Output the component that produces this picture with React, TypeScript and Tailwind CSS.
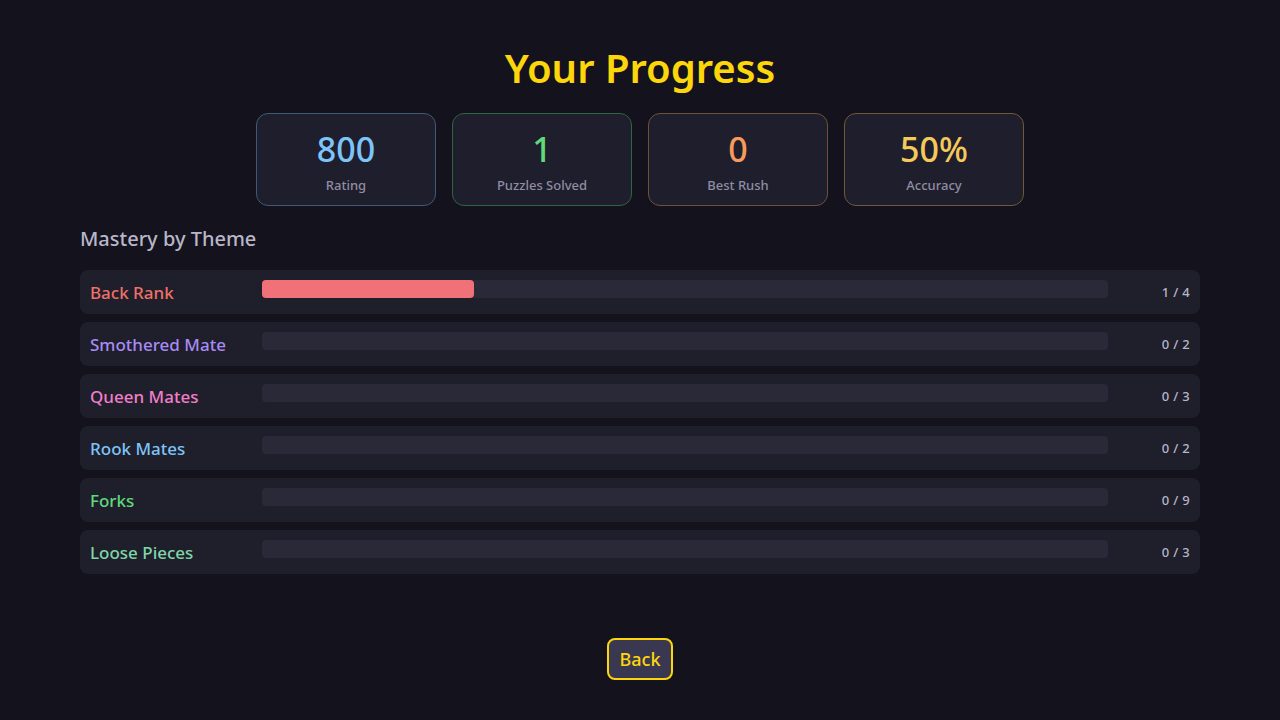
const stats = [
  { value: '800', label: 'Rating', text: 'text-[#7cc4fa]', border: 'border-[#3f5a78]' },
  { value: '1', label: 'Puzzles Solved', text: 'text-[#5fd97a]', border: 'border-[#2f6540]' },
  { value: '0', label: 'Best Rush', text: 'text-[#f79a5a]', border: 'border-[#6e5236]' },
  { value: '50%', label: 'Accuracy', text: 'text-[#f5c95a]', border: 'border-[#6e5a36]' },
]

const themes = [
  { name: 'Back Rank', color: 'text-[#ee7068]', solved: 1, total: 4 },
  { name: 'Smothered Mate', color: 'text-[#a98af5]', solved: 0, total: 2 },
  { name: 'Queen Mates', color: 'text-[#f07ec8]', solved: 0, total: 3 },
  { name: 'Rook Mates', color: 'text-[#7cc4fa]', solved: 0, total: 2 },
  { name: 'Forks', color: 'text-[#5fd97a]', solved: 0, total: 9 },
  { name: 'Loose Pieces', color: 'text-[#7fd6a8]', solved: 0, total: 3 },
]

export default function App() {
  return (
    <div className="min-h-screen w-full bg-[#14131d] font-['Noto_Sans',sans-serif]">
      <div className="mx-auto w-[1120px] pt-[41px]">
        <h1 className="text-center text-[40px] font-semibold leading-[54px] text-[#ffd60a]">Your Progress</h1>

        <div className="mt-[18px] flex justify-center gap-4">
          {stats.map((s, i) => (
            <div key={i} className={`flex h-[93px] w-[180px] flex-col items-center rounded-xl border bg-[#1f1e2c] pt-[12px] ${s.border}`}>
              <p className={`text-[34px] font-medium leading-[46px] ${s.text}`}>{s.value}</p>
              <p className="mt-[4px] text-[13px] font-medium text-[#8f8ca3]">{s.label}</p>
            </div>
          ))}
        </div>

        <h2 className="mt-[19px] text-[20px] font-medium leading-[28px] text-[#b9b6c9]">Mastery by Theme</h2>

        <div className="mt-[17px] flex flex-col gap-2">
          {themes.map((t, i) => (
            <div key={i} className="flex h-[44px] items-start rounded-lg bg-[#1f1e2b] px-[10px] pt-[10px]">
              <span className={`w-[172px] pt-[1px] text-[17px] font-medium leading-[24px] ${t.color}`}>{t.name}</span>
              <div className="h-[18px] w-[846px] rounded bg-[#2a2937]">
                <div className="h-full rounded bg-[#f07178]" style={{ width: `${(t.solved / t.total) * 100}%` }} />
              </div>
              <span className="ml-auto pt-[1px] text-[13px] font-medium leading-[22px] tracking-wide text-[#b8b5c8]">
                {t.solved} / {t.total}
              </span>
            </div>
          ))}
        </div>

        <div className="mt-[64px] flex justify-center">
          <button className="h-[42px] rounded-lg border-2 border-[#ffd60a] bg-[#3a3850] px-[11px] text-[18px] font-medium text-[#ffd60a]">
            Back
          </button>
        </div>
      </div>
    </div>
  )
}
